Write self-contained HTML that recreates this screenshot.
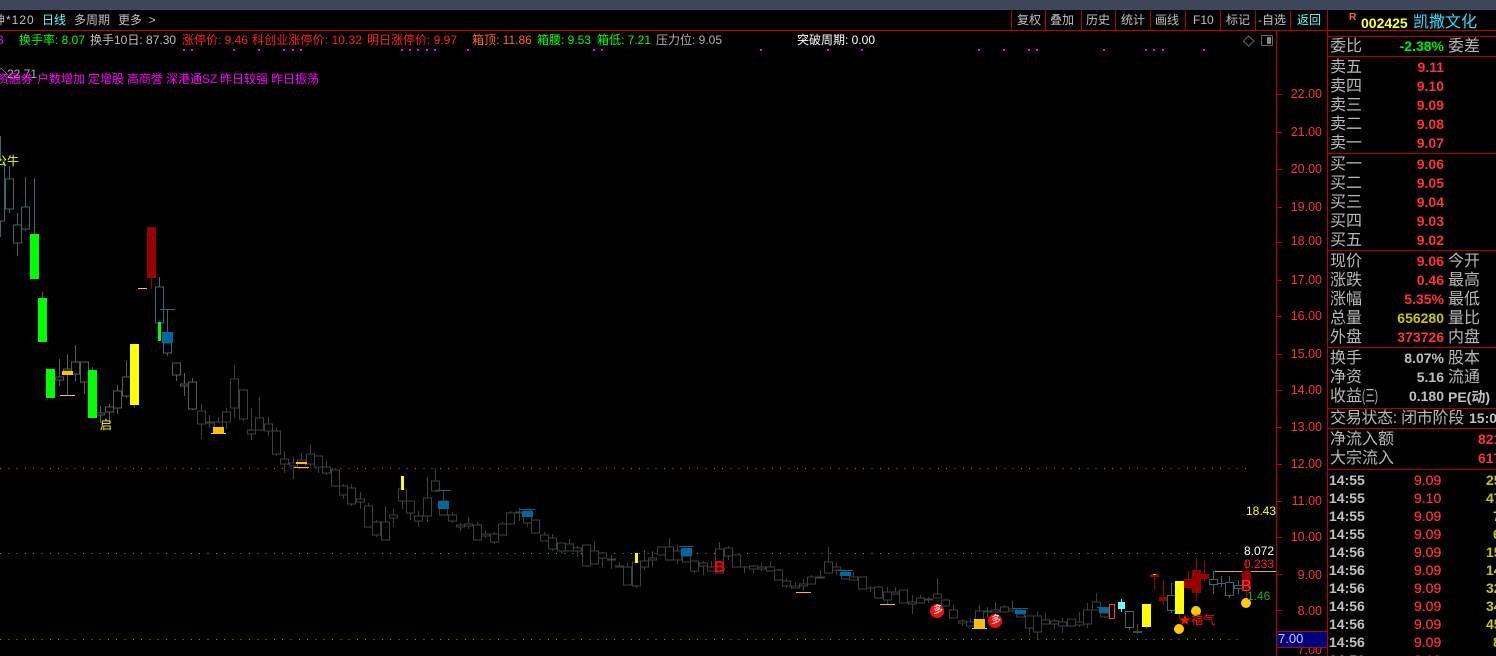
<!DOCTYPE html>
<html><head><meta charset="utf-8"><style>
html,body{margin:0;padding:0;background:#000;width:1496px;height:656px;overflow:hidden}
body{position:relative;font-family:"Liberation Sans","WenQuanYi Zen Hei","Noto Sans CJK SC",sans-serif}
.t{position:absolute;white-space:nowrap;line-height:18px;font-size:12px}
.l{font-size:16px;color:#b8b8b8;left:1330px;margin-top:1px}
.r{font-size:16px;color:#b8b8b8;left:1448px;margin-top:1px}
.v{font:bold 14px/18px "Liberation Sans",sans-serif;right:52px;color:#ff3333}
.h{position:absolute;background:#b00000;height:1px;left:1327px;width:169px}
.b{position:absolute;background:#b00000;width:1px;top:10px;height:20px}
.m{font-size:12px;color:#c0c0c0;top:11px}
.tm{font:bold 14px/18px "Liberation Sans",sans-serif;color:#c0c0c0;left:1329px}
.p{font:14px/18px "Liberation Sans",sans-serif;color:#ff3333;left:1414px;-webkit-text-stroke:.25px #ff3333}
.y{font:bold 14px/18px "Liberation Sans",sans-serif;color:#c8c800}
.a{font:12.500px/18px "Liberation Sans",sans-serif;color:#ff3333;right:174px}
svg{position:absolute;left:0;top:0}
</style></head><body>
<div style="position:absolute;left:0;top:0;width:1496px;height:10px;background:#3e465a"></div>

<svg width="1496" height="656" viewBox="0 0 1496 656" shape-rendering="crispEdges">
<path d="M0 468.500H1248" stroke="#ff4400" stroke-dasharray="1 7.300" fill="none"/>
<path d="M0 553.500H1240" stroke="#00e000" stroke-dasharray="1 7.300" fill="none"/>
<path d="M0 639.500H1240" stroke="#00e000" stroke-dasharray="1 7.300" fill="none"/>
<path d="M1215 571.500H1276" stroke="#e0a868"/>

<g fill="#000" stroke="#34686c">
<path fill="none" d="M.5 136V237M9.500 166V213M17.500 213V256M25.500 177V231M34.500 178V234M42.500 292V298M159.500 277V323M167.500 310V356"/>
<path d="M-4.500 160h9v61h-9zM5.500 179h8v30h-8zM13.500 225h8v18h-8zM21.500 207h8v22h-8zM155.500 287h8v36h-8zM163.500 343h8v10h-8z"/>
<path fill="none" d="M160 309.500h15" stroke="#2a6080"/>
</g>

<g fill="#000" stroke="#5a5a5a">
<path fill="none" d="M59.500 359V386M67.500 354V395M75.500 345V381M84.500 362V394M100.500 406V423M109.500 404V422M117.500 385V414M126.500 361V398M176.500 363V381M184.500 373V396M192.500 378V410"/>
<path d="M55.500 377h8v3h-8zM63.500 369h8v2h-8zM71.500 362h8v12h-8zM80.500 362h8v20h-8zM96.500 413h8v2h-8zM105.500 407h8v5h-8zM113.500 391h8v17h-8zM122.500 377h8v19h-8zM172.500 363h8v12h-8zM180.500 384h8v2h-8zM188.500 382h8v27h-8z"/>
</g>

<g fill="#000" stroke="#3f3f3f">
<path fill="none" d="M201.500 404V439M209.500 415V428M218.500 417V430M226.500 408V429M234.500 365V418M243.500 390V421M251.500 408V440M259.500 397V430M268.500 417V436M276.500 428V456M284.500 451V473M293.500 457V479M301.500 453V468M310.500 445V466M318.500 456V473M326.500 461V475M335.500 468V487M343.500 484V499M351.500 484V506M360.500 492V509M368.500 503V527M376.500 520V537M385.500 506V540M393.500 509V527M402.500 489V509M410.500 501V520M418.500 511V527M427.500 477V522M435.500 468V492M443.500 490V515M452.500 512V523M460.500 523V531M468.500 517V529M477.500 522V540M485.500 531V538M494.500 532V544M502.500 522V535M510.500 511V524M519.500 508V521M527.500 511V527M535.500 520V534M544.500 532V541M552.500 534V551M561.500 543V554M569.500 539V551M577.500 546V557M586.500 545V566M594.500 542V564M602.500 552V567M611.500 555V569M619.500 562V567M627.500 563V585M636.500 562V588M644.500 550V570M652.500 551V567M661.500 547V555M669.500 538V560M677.500 545V564M686.500 556V562M694.500 561V573M703.500 561V575M711.500 561V571M719.500 542V573M728.500 546V560M736.500 555V567M744.500 566V573M753.500 565V573M761.500 563V571M770.500 561V571M778.500 569V580M786.500 578V588M795.500 582V588M803.500 579V591M811.500 575V584M820.500 570V578M828.500 547V573M836.500 563V575M845.500 570V579M853.500 572V580M862.500 577V589M870.500 586V592M878.500 586V598M887.500 587V604M895.500 587V594M903.500 590V603M912.500 595V614M920.500 595V603M928.500 597V603M937.500 578V598M945.500 599V606M953.500 605V618M962.500 619V626M970.500 618V626M979.500 605V628M987.500 607V618M995.500 602V612M1004.500 605V612M1012.500 601V612M1020.500 608V617M1029.500 616V635M1037.500 611V639M1045.500 613V624M1054.500 619V629M1062.500 618V633M1071.500 619V626M1079.500 612V627M1087.500 603V628M1096.500 593V610M1104.500 607V618"/>
<path d="M197.500 411h8v13h-8zM205.500 422h8v1h-8zM214.500 422h8v8h-8zM222.500 412h8v10h-8zM230.500 379h8v29h-8zM239.500 390h8v29h-8zM247.500 430h8v4h-8zM255.500 418h8v12h-8zM264.500 424h8v7h-8zM272.500 431h8v23h-8zM280.500 459h8v5h-8zM289.500 463h8v3h-8zM297.500 460h8v8h-8zM306.500 454h8v10h-8zM314.500 456h8v11h-8zM322.500 467h8v6h-8zM331.500 470h8v16h-8zM339.500 486h8v9h-8zM347.500 488h8v16h-8zM356.500 499h8v3h-8zM364.500 506h8v21h-8zM372.500 522h8v13h-8zM381.500 522h8v18h-8zM389.500 515h8v3h-8zM398.500 489h8v12h-8zM406.500 501h8v12h-8zM414.500 516h8v5h-8zM423.500 498h8v18h-8zM431.500 481h8v10h-8zM439.500 501h8v14h-8zM448.500 515h8v6h-8zM456.500 525h8v2h-8zM464.500 524h8v2h-8zM473.500 525h8v15h-8zM481.500 534h8v2h-8zM490.500 534h8v8h-8zM498.500 524h8v11h-8zM506.500 513h8v11h-8zM515.500 512h8v1h-8zM523.500 511h8v12h-8zM531.500 520h8v13h-8zM540.500 535h8v6h-8zM548.500 538h8v11h-8zM557.500 543h8v8h-8zM565.500 544h8v7h-8zM573.500 548h8v3h-8zM582.500 545h8v21h-8zM590.500 551h8v13h-8zM598.500 553h8v5h-8zM607.500 559h8v1h-8zM615.500 566h8v1h-8zM623.500 567h8v18h-8zM632.500 562h8v24h-8zM640.500 561h8v6h-8zM648.500 558h8v2h-8zM657.500 547h8v8h-8zM665.500 547h8v13h-8zM673.500 551h8v9h-8zM682.500 556h8v6h-8zM690.500 561h8v10h-8zM699.500 563h8v3h-8zM707.500 567h8v4h-8zM715.500 549h8v24h-8zM724.500 548h8v8h-8zM732.500 555h8v12h-8zM740.500 567h8v0h-8zM749.500 566h8v3h-8zM757.500 567h8v2h-8zM766.500 567h8v4h-8zM774.500 570h8v10h-8zM782.500 581h8v5h-8zM791.500 586h8v2h-8zM799.500 584h8v2h-8zM807.500 577h8v7h-8zM816.500 577h8v1h-8zM824.500 562h8v11h-8zM832.500 567h8v3h-8zM841.500 572h8v7h-8zM849.500 577h8v3h-8zM858.500 577h8v12h-8zM866.500 588h8v0h-8zM874.500 587h8v11h-8zM883.500 592h8v8h-8zM891.500 592h8v2h-8zM899.500 590h8v13h-8zM908.500 602h8v2h-8zM916.500 598h8v5h-8zM924.500 599h8v1h-8zM933.500 594h8v4h-8zM941.500 600h8v6h-8zM949.500 610h8v8h-8zM958.500 621h8v2h-8zM966.500 622h8v4h-8zM975.500 611h8v17h-8zM983.500 611h8v1h-8zM991.500 610h8v2h-8zM1000.500 607h8v5h-8zM1008.500 609h8v2h-8zM1016.500 614h8v3h-8zM1025.500 616h8v12h-8zM1033.500 616h8v16h-8zM1041.500 620h8v4h-8zM1050.500 621h8v3h-8zM1058.500 622h8v4h-8zM1067.500 619h8v7h-8zM1075.500 622h8v3h-8zM1083.500 610h8v14h-8zM1092.500 602h8v8h-8zM1100.500 613h8v4h-8z"/>
</g>

<!-- solid bodies -->
<g shape-rendering="crispEdges">
<rect x="30" y="234" width="9" height="45" fill="#00ff00"/>
<rect x="38" y="298" width="9" height="44" fill="#00ff00"/>
<rect x="46" y="369" width="9" height="29" fill="#00ff00"/>
<rect x="88" y="370" width="9" height="48" fill="#00ff00"/>
<rect x="92" y="367" width="1" height="3" fill="#34686c"/>
<rect x="158" y="322" width="3" height="19" fill="#00ff00"/>
<rect x="130" y="344" width="9" height="61" fill="#ffff00"/>
<rect x="134" y="405" width="1" height="3" fill="#444"/>
<rect x="147" y="227" width="9" height="51" fill="#990000"/>
<rect x="151" y="278" width="1" height="11" fill="#990000"/>
<rect x="138" y="288" width="9" height="1" fill="#ffcc00"/>
<rect x="162" y="332" width="11" height="11" fill="#00689f"/>
<rect x="62" y="371" width="11" height="4" fill="#ffc000"/>
<rect x="60" y="395" width="15" height="1" fill="#e8c070"/>
<rect x="213" y="427" width="11" height="6" fill="#ffc000"/>
<rect x="211" y="433" width="15" height="1" fill="#ffc000"/>
<rect x="296" y="462" width="11" height="2" fill="#ffc000"/>
<rect x="294" y="467" width="15" height="1" fill="#ffc000"/>
<rect x="401" y="476" width="3" height="14" fill="#ffff00"/>
<rect x="438" y="501" width="11" height="8" fill="#00689f"/><rect x="436" y="490" width="15" height="1" fill="#00689f"/>
<rect x="522" y="511" width="11" height="6" fill="#00689f"/><rect x="520" y="509" width="15" height="1" fill="#00689f"/>
<rect x="635" y="553" width="3" height="10" fill="#ffff00"/>
<rect x="681" y="548" width="11" height="8" fill="#00689f"/><rect x="679" y="546" width="15" height="1" fill="#00689f"/>
<rect x="796" y="592" width="15" height="1" fill="#ffc000"/>
<rect x="840" y="572" width="11" height="4" fill="#00689f"/><rect x="838" y="570" width="15" height="1" fill="#00689f"/>
<rect x="880" y="604" width="15" height="1" fill="#ffc000"/>
<rect x="974" y="619" width="11" height="9" fill="#ffc000"/><rect x="972" y="628" width="15" height="1" fill="#ffc000"/>
<rect x="1015" y="610" width="11" height="4" fill="#00689f"/><rect x="1013" y="608" width="15" height="1" fill="#00689f"/>
<rect x="1099" y="607" width="11" height="6" fill="#00689f"/><rect x="1097" y="607" width="15" height="1" fill="#00689f"/>
<rect x="1109.500" y="604.500" width="5" height="14" fill="#000" stroke="#ff3c3c"/>
<rect x="1121" y="599" width="1" height="13" fill="#66ffff"/>
<rect x="1118" y="602" width="7" height="7" fill="#66ffff"/>
<rect x="1125.500" y="611.500" width="8" height="16" fill="#000" stroke="#5a5a5a"/>
<rect x="1129" y="628" width="1" height="2" fill="#5a5a5a"/>
<rect x="1137" y="624" width="1" height="10" fill="#444"/>
<rect x="1133" y="631" width="9" height="2" fill="#444"/>
<rect x="1142" y="604" width="9" height="23" fill="#ffff00"/>
<rect x="1146" y="627" width="1" height="2" fill="#444"/>
<rect x="1154" y="577" width="1" height="13" fill="#990000"/>
<rect x="1150" y="574" width="9" height="3" fill="#990000"/>
<rect x="1153" y="574" width="3" height="1" fill="#ffcc00"/>
<rect x="1163" y="580" width="1" height="25" fill="#990000"/>
<rect x="1159" y="597" width="8" height="4" fill="#990000"/>
<rect x="1171" y="583" width="1" height="30" fill="#34686c"/>
<rect x="1167.500" y="595.500" width="8" height="15" fill="#000" stroke="#34686c"/>
<rect x="1179" y="614" width="1" height="5" fill="#990000"/>
<rect x="1175" y="581" width="9" height="33" fill="#ffff00"/>
<rect x="1188" y="571" width="1" height="19" fill="#990000"/>
<rect x="1184" y="579" width="8" height="9" fill="#990000"/>
<rect x="1196" y="558" width="1" height="43" fill="#990000"/>
<rect x="1192" y="570" width="9" height="23" fill="#990000"/>
<rect x="1204" y="560" width="1" height="21" fill="#990000"/>
<rect x="1200" y="574" width="9" height="5" fill="#990000"/>
<rect x="1213" y="571" width="1" height="23" fill="#34686c"/>
<rect x="1209.500" y="579.500" width="8" height="5" fill="#000" stroke="#34686c"/>
<rect x="1221" y="576" width="1" height="11" fill="#34686c"/>
<rect x="1217" y="583" width="9" height="1" fill="#34686c"/>
<rect x="1229" y="576" width="1" height="22" fill="#34686c"/>
<rect x="1225.500" y="582.500" width="8" height="13" fill="#000" stroke="#34686c"/>
<rect x="1238" y="580" width="1" height="14" fill="#34686c"/>
<rect x="1234.500" y="585.500" width="8" height="3" fill="#000" stroke="#34686c"/>
<rect x="1246" y="560" width="1" height="40" fill="#990000"/>
<rect x="1242" y="571" width="9" height="17" fill="#990000"/>
</g>
<g shape-rendering="auto">
<circle cx="937" cy="611" r="7" fill="#ee1111"/>
<circle cx="995" cy="621" r="7" fill="#ee1111"/>
<circle cx="1179" cy="629" r="5" fill="#ffcc00"/>
<circle cx="1196" cy="611" r="5" fill="#ffcc00"/>
<circle cx="1246" cy="603" r="5" fill="#ffcc00"/>
</g>
<!-- magenta dots -->
<path fill="#ff00ff" d="M183 49h2v2h-2zM191 49h2v2h-2zM233 49h2v2h-2zM258 49h2v2h-2zM283 49h2v2h-2zM292 49h2v2h-2zM300 49h2v2h-2zM401 49h2v2h-2zM409 49h2v2h-2zM417 49h2v2h-2zM426 49h2v2h-2zM434 49h2v2h-2zM467 49h2v2h-2zM593 49h2v2h-2zM601 49h2v2h-2zM760 49h2v2h-2zM827 49h2v2h-2zM861 49h2v2h-2zM978 49h2v2h-2zM1003 49h2v2h-2zM1028 49h2v2h-2zM1036 49h2v2h-2zM1103 49h2v2h-2zM1145 49h2v2h-2zM1153 49h2v2h-2zM1162 49h2v2h-2zM1203 49h2v2h-2z"/>
<!-- axis -->
<path fill="none" stroke="#c00000" d="M1276.500 30V656M1277 94.500h5M1277 132.500h5M1277 169.500h5M1277 207.500h5M1277 242.500h5M1277 280.500h5M1277 316.500h5M1277 354.500h5M1277 390.500h5M1277 427.500h5M1277 464.500h5M1277 501.500h5M1277 537.500h5M1277 574.500h5M1277 610.500h5"/>
<rect x="1276.500" y="631.500" width="51" height="16" fill="#00007f" stroke="#c00000" stroke-width="1"/>
<!-- icons -->
<g shape-rendering="auto" fill="none" stroke="#666">
<path d="M1248.500 36L1254 41L1248.500 46L1243.500 41Z"/>
</g>
<rect x="1261.500" y="35.500" width="11" height="10" rx="1" fill="#000" stroke="#666"/>
<rect x="1267" y="37" width="4" height="7" fill="#888"/>
</svg>

<!-- toolbar -->
<div class="h" style="left:0;width:1496px;top:30px;background:#c00000"></div>
<div class="t m" style="left:-7px;letter-spacing:1px">神*120</div>
<div class="t m" style="left:42px;color:#66ffff">日线</div>
<div class="t m" style="left:74px">多周期</div>
<div class="t m" style="left:118px">更多&nbsp;&nbsp;&gt;</div>
<div class="b" style="left:1011px"></div><div class="b" style="left:1045px"></div><div class="b" style="left:1081px"></div><div class="b" style="left:1115px"></div><div class="b" style="left:1150px"></div><div class="b" style="left:1185px"></div><div class="b" style="left:1220px"></div><div class="b" style="left:1255px"></div><div class="b" style="left:1290px"></div>
<div class="t m" style="left:1017px">复权</div>
<div class="t m" style="left:1050px">叠加</div>
<div class="t m" style="left:1086px">历史</div>
<div class="t m" style="left:1121px">统计</div>
<div class="t m" style="left:1155px">画线</div>
<div class="t m" style="left:1193px">F10</div>
<div class="t m" style="left:1226px">标记</div>
<div class="t m" style="left:1258px">-自选</div>
<div class="t m" style="left:1297px;color:#66ffff">返回</div>

<!-- indicator row -->
<div class="t" style="left:-3px;top:31px;color:#ff00ff">8</div>
<div class="t" style="left:19px;top:31px;color:#00ff00">换手率: 8.07</div>
<div class="t" style="left:90px;top:31px;color:#c0c0c0">换手10日: 87.30</div>
<div class="t" style="left:182px;top:31px;color:#ff2020">涨停价: 9.46</div>
<div class="t" style="left:252px;top:31px;color:#ff2020;letter-spacing:.1px">科创业涨停价: 10.32</div>
<div class="t" style="left:367px;top:31px;color:#ff2020">明日涨停价: 9.97</div>
<div class="t" style="left:472px;top:31px;color:#ff6a10">箱顶: 11.86</div>
<div class="t" style="left:537px;top:31px;color:#00ff00">箱腰: 9.53</div>
<div class="t" style="left:597px;top:31px;color:#00ff00">箱低: 7.21</div>
<div class="t" style="left:656px;top:31px;color:#b0b0b0">压力位: 9.05</div>
<div class="t" style="left:797px;top:31px;color:#fff">突破周期: 0.00</div>

<div class="t" style="left:-5px;top:65px;color:#b0b0b0">◇22.71</div>
<div class="t" style="left:-15px;top:70px;color:#ff00ff">融资融券</div>
<div class="t" style="left:37px;top:70px;color:#ff00ff">户数增加</div>
<div class="t" style="left:88px;top:70px;color:#ff00ff">定增股</div>
<div class="t" style="left:127px;top:70px;color:#ff00ff">高商誉</div>
<div class="t" style="left:166px;top:70px;color:#ff00ff">深港通SZ</div>
<div class="t" style="left:220px;top:70px;color:#ff00ff">昨日较强</div>
<div class="t" style="left:271px;top:70px;color:#ff00ff">昨日振荡</div>

<!-- chart labels -->
<div class="t" style="left:-5px;top:152px;color:#ffff00">公牛</div>
<div class="t" style="left:100px;top:416px;color:#ffff00">启</div>
<div class="t" style="left:933px;top:604px;font-size:10px;line-height:14px;color:#fff">多</div>
<div class="t" style="left:991px;top:614px;font-size:10px;line-height:14px;color:#fff">多</div>
<div class="t" style="left:714px;top:559px;font-size:16px;font-weight:bold;color:#ff0000">B</div>
<div class="t" style="left:1241px;top:578px;font-size:16px;color:#ff3333">B</div>
<div class="t" style="left:1179px;top:611px;color:#ff1010">★福气</div>
<div class="t" style="left:1246px;top:502px;color:#ffff33">18.43</div>
<div class="t" style="left:1244px;top:542px;color:#fff">8.072</div>
<div class="t" style="left:1244px;top:555px;color:#ff2020">0.233</div>
<div class="t" style="left:1247px;top:587px;color:#33aa00">1.46</div>

<div class="t a" style="top:85px">22.00</div><div class="t a" style="top:123px">21.00</div><div class="t a" style="top:160px">20.00</div><div class="t a" style="top:198px">19.00</div><div class="t a" style="top:232px">18.00</div><div class="t a" style="top:271px">17.00</div><div class="t a" style="top:307px">16.00</div><div class="t a" style="top:345px">15.00</div><div class="t a" style="top:381px">14.00</div><div class="t a" style="top:418px">13.00</div><div class="t a" style="top:455px">12.00</div><div class="t a" style="top:492px">11.00</div><div class="t a" style="top:528px">10.00</div><div class="t a" style="top:566px">9.00</div><div class="t a" style="top:602px">8.00</div>
<div style="position:absolute;left:1277px;top:648px;width:49px;height:8px;overflow:hidden"><div class="t a" style="top:-7px;right:4px">7.00</div></div>
<div class="t" style="left:1278px;top:630px;font-size:13px;color:#c8c8ff">7.00</div>

<!-- right panel -->
<div style="position:absolute;left:1327px;top:10px;width:1px;height:646px;background:#b00000"></div>
<div class="t" style="left:1349px;top:9px;font:bold 10px/18px 'Liberation Sans',sans-serif;color:#ff6050">R</div>
<div class="t" style="left:1361px;top:14px;font:bold 14px/18px 'Liberation Sans',sans-serif;color:#ffff33">002425</div>
<div class="t" style="left:1413px;top:14px;font-size:16px;color:#33ddff">凯撒文化</div>
<div class="h" style="top:36px"></div>
<div class="t l" style="top:37px">委比</div><div class="t v" style="top:37px;color:#00ee00">-2.38%</div><div class="t r" style="top:37px">委差</div>
<div class="h" style="top:56px"></div>
<div class="t l" style="top:58px">卖五</div><div class="t v" style="top:58px">9.11</div>
<div class="t l" style="top:77px">卖四</div><div class="t v" style="top:77px">9.10</div>
<div class="t l" style="top:96px">卖三</div><div class="t v" style="top:96px">9.09</div>
<div class="t l" style="top:115px">卖二</div><div class="t v" style="top:115px">9.08</div>
<div class="t l" style="top:134px">卖一</div><div class="t v" style="top:134px">9.07</div>
<div class="h" style="top:153px"></div>
<div class="t l" style="top:155px">买一</div><div class="t v" style="top:155px">9.06</div>
<div class="t l" style="top:174px">买二</div><div class="t v" style="top:174px">9.05</div>
<div class="t l" style="top:193px">买三</div><div class="t v" style="top:193px">9.04</div>
<div class="t l" style="top:212px">买四</div><div class="t v" style="top:212px">9.03</div>
<div class="t l" style="top:231px">买五</div><div class="t v" style="top:231px">9.02</div>
<div class="h" style="top:250px"></div>
<div class="t l" style="top:252px">现价</div><div class="t v" style="top:252px">9.06</div><div class="t r" style="top:252px">今开</div>
<div class="t l" style="top:271px">涨跌</div><div class="t v" style="top:271px">0.46</div><div class="t r" style="top:271px">最高</div>
<div class="t l" style="top:290px">涨幅</div><div class="t v" style="top:290px">5.35%</div><div class="t r" style="top:290px">最低</div>
<div class="t l" style="top:309px">总量</div><div class="t v" style="top:309px;color:#c8c800">656280</div><div class="t r" style="top:309px">量比</div>
<div class="t l" style="top:328px">外盘</div><div class="t v" style="top:328px">373726</div><div class="t r" style="top:328px">内盘</div>
<div class="h" style="top:347px"></div>
<div class="t l" style="top:349px">换手</div><div class="t v" style="top:349px;color:#c0c0c0">8.07%</div><div class="t r" style="top:349px">股本</div>
<div class="t l" style="top:368px">净资</div><div class="t v" style="top:368px;color:#c0c0c0">5.16</div><div class="t r" style="top:368px">流通</div>
<div class="t l" style="top:387px">收益<span style="display:inline-block;transform:scaleX(.6);transform-origin:left center">(三)</span></div><div class="t v" style="top:387px;color:#c0c0c0">0.180</div><div class="t r" style="top:387px;font:bold 14px/18px 'Liberation Sans','Noto Sans CJK SC',sans-serif;color:#c0c0c0">PE(动)</div>
<div class="h" style="top:408px"></div>
<div class="t l" style="top:409px;letter-spacing:-.3px">交易状态: 闭市阶段</div><div class="t" style="left:1469px;top:409px;font:bold 14px/18px 'Liberation Sans',sans-serif;color:#c0c0c0">15:00</div>
<div class="h" style="top:428px"></div>
<div class="t l" style="top:430px">净流入额</div><div class="t" style="left:1478px;top:430px;font:bold 14px/18px 'Liberation Sans',sans-serif;color:#ff3333">821</div>
<div class="t l" style="top:449px">大宗流入</div><div class="t" style="left:1478px;top:449px;font:bold 14px/18px 'Liberation Sans',sans-serif;color:#ff3333">617</div>
<div class="h" style="top:469px"></div>

<div class="t tm" style="top:471px">14:55</div><div class="t p" style="top:471px">9.09</div><div class="t y" style="left:1486px;top:471px">25</div>
<div class="t tm" style="top:489px">14:55</div><div class="t p" style="top:489px">9.10</div><div class="t y" style="left:1486px;top:489px">47</div>
<div class="t tm" style="top:507px">14:55</div><div class="t p" style="top:507px">9.09</div><div class="t y" style="left:1493px;top:507px">7</div>
<div class="t tm" style="top:525px">14:55</div><div class="t p" style="top:525px">9.09</div><div class="t y" style="left:1493px;top:525px">6</div>
<div class="t tm" style="top:543px">14:56</div><div class="t p" style="top:543px">9.09</div><div class="t y" style="left:1486px;top:543px">15</div>
<div class="t tm" style="top:561px">14:56</div><div class="t p" style="top:561px">9.09</div><div class="t y" style="left:1486px;top:561px">14</div>
<div class="t tm" style="top:579px">14:56</div><div class="t p" style="top:579px">9.09</div><div class="t y" style="left:1486px;top:579px">32</div>
<div class="t tm" style="top:597px">14:56</div><div class="t p" style="top:597px">9.09</div><div class="t y" style="left:1486px;top:597px">34</div>
<div class="t tm" style="top:615px">14:56</div><div class="t p" style="top:615px">9.09</div><div class="t y" style="left:1486px;top:615px">45</div>
<div class="t tm" style="top:633px">14:56</div><div class="t p" style="top:633px">9.09</div><div class="t y" style="left:1493px;top:633px">8</div>
<div class="t tm" style="top:651px">14:56</div><div class="t p" style="top:651px">9.10</div>
</body></html>
